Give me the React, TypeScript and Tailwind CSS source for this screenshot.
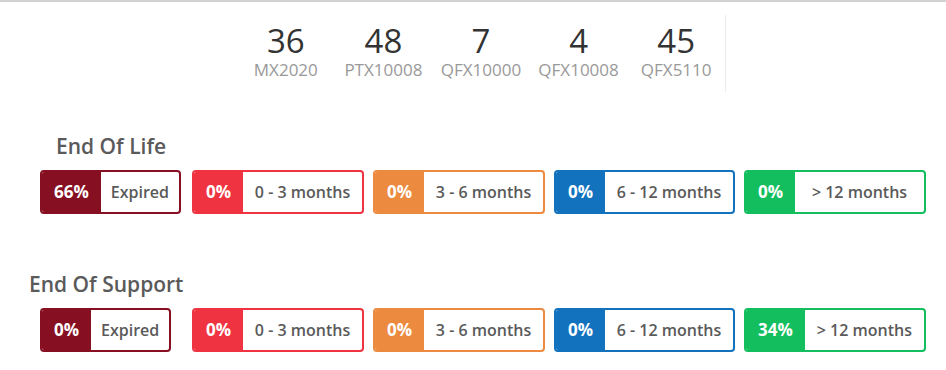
import React from "react";

type Badge = { pct: string; label: string; color: string; w?: string };

const colors = {
  darkred: "#861022",
  red: "#ef3340",
  orange: "#ec8a3f",
  blue: "#1272be",
  green: "#13be5e",
};

const stats = [
  { n: "36", l: "MX2020" },
  { n: "48", l: "PTX10008" },
  { n: "7", l: "QFX10000" },
  { n: "4", l: "QFX10008" },
  { n: "45", l: "QFX5110" },
];

function BadgeRow({ items }: { items: Badge[] }) {
  return (
    <div className="flex ml-[40px] gap-[9px]">
      {items.map((b, i) => {
        const box = (
          <div
            key={i}
            className={`flex h-[44px] rounded-[4px] border-2 overflow-hidden bg-white ${b.w ?? ""}`}
            style={{ borderColor: b.color }}
          >
            <div
              className="flex items-center justify-center px-[12px] text-white font-bold text-[17px]"
              style={{ backgroundColor: b.color }}
            >
              {b.pct}
            </div>
            <div className="flex flex-1 items-center justify-center px-[10px] text-[16px] font-semibold text-[#5a5a5a]">
              {b.label}
            </div>
          </div>
        );
        if (i === 0) {
          return (
            <div key={i} className="w-[143px] flex">
              {box}
            </div>
          );
        }
        return box;
      })}
    </div>
  );
}

function rowItems(p: string[]): Badge[] {
  return [
    { pct: p[0], label: "Expired", color: colors.darkred },
    { pct: p[1], label: "0 - 3 months", color: colors.red, w: "w-[172px]" },
    { pct: p[2], label: "3 - 6 months", color: colors.orange, w: "w-[172px]" },
    { pct: p[3], label: "6 - 12 months", color: colors.blue, w: "w-[181px]" },
    { pct: p[4], label: "> 12 months", color: colors.green, w: "w-[182px]" },
  ];
}

export default function App() {
  return (
    <div
      className="w-[946px] h-[370px] bg-white border-t-2 border-[#d2d2d2] overflow-hidden"
      style={{ fontFamily: '"Open Sans", "Liberation Sans", sans-serif' }}
    >
      <div className="flex ml-[237px] mt-[13px] w-[489px] border-r border-[#ececec] pt-[8px] pb-[11px]">
        {stats.map((s) => (
          <div key={s.l} className="flex-1 flex flex-col items-center">
            <div className="text-[33px] leading-[36px] text-[#333]">{s.n}</div>
            <div className="text-[17px] leading-[22px] text-[#999]">{s.l}</div>
          </div>
        ))}
      </div>

      <div className="mt-[40px] ml-[56px] text-[21px] leading-[28px] font-semibold text-[#5a5a5a]">
        End Of Life
      </div>
      <div className="mt-[10px]">
        <BadgeRow items={rowItems(["66%", "0%", "0%", "0%", "0%"])} />
      </div>

      <div className="mt-[56px] ml-[29px] text-[21px] leading-[28px] font-semibold text-[#5a5a5a]">
        End Of Support
      </div>
      <div className="mt-[10px]">
        <BadgeRow items={rowItems(["0%", "0%", "0%", "0%", "34%"])} />
      </div>
    </div>
  );
}
